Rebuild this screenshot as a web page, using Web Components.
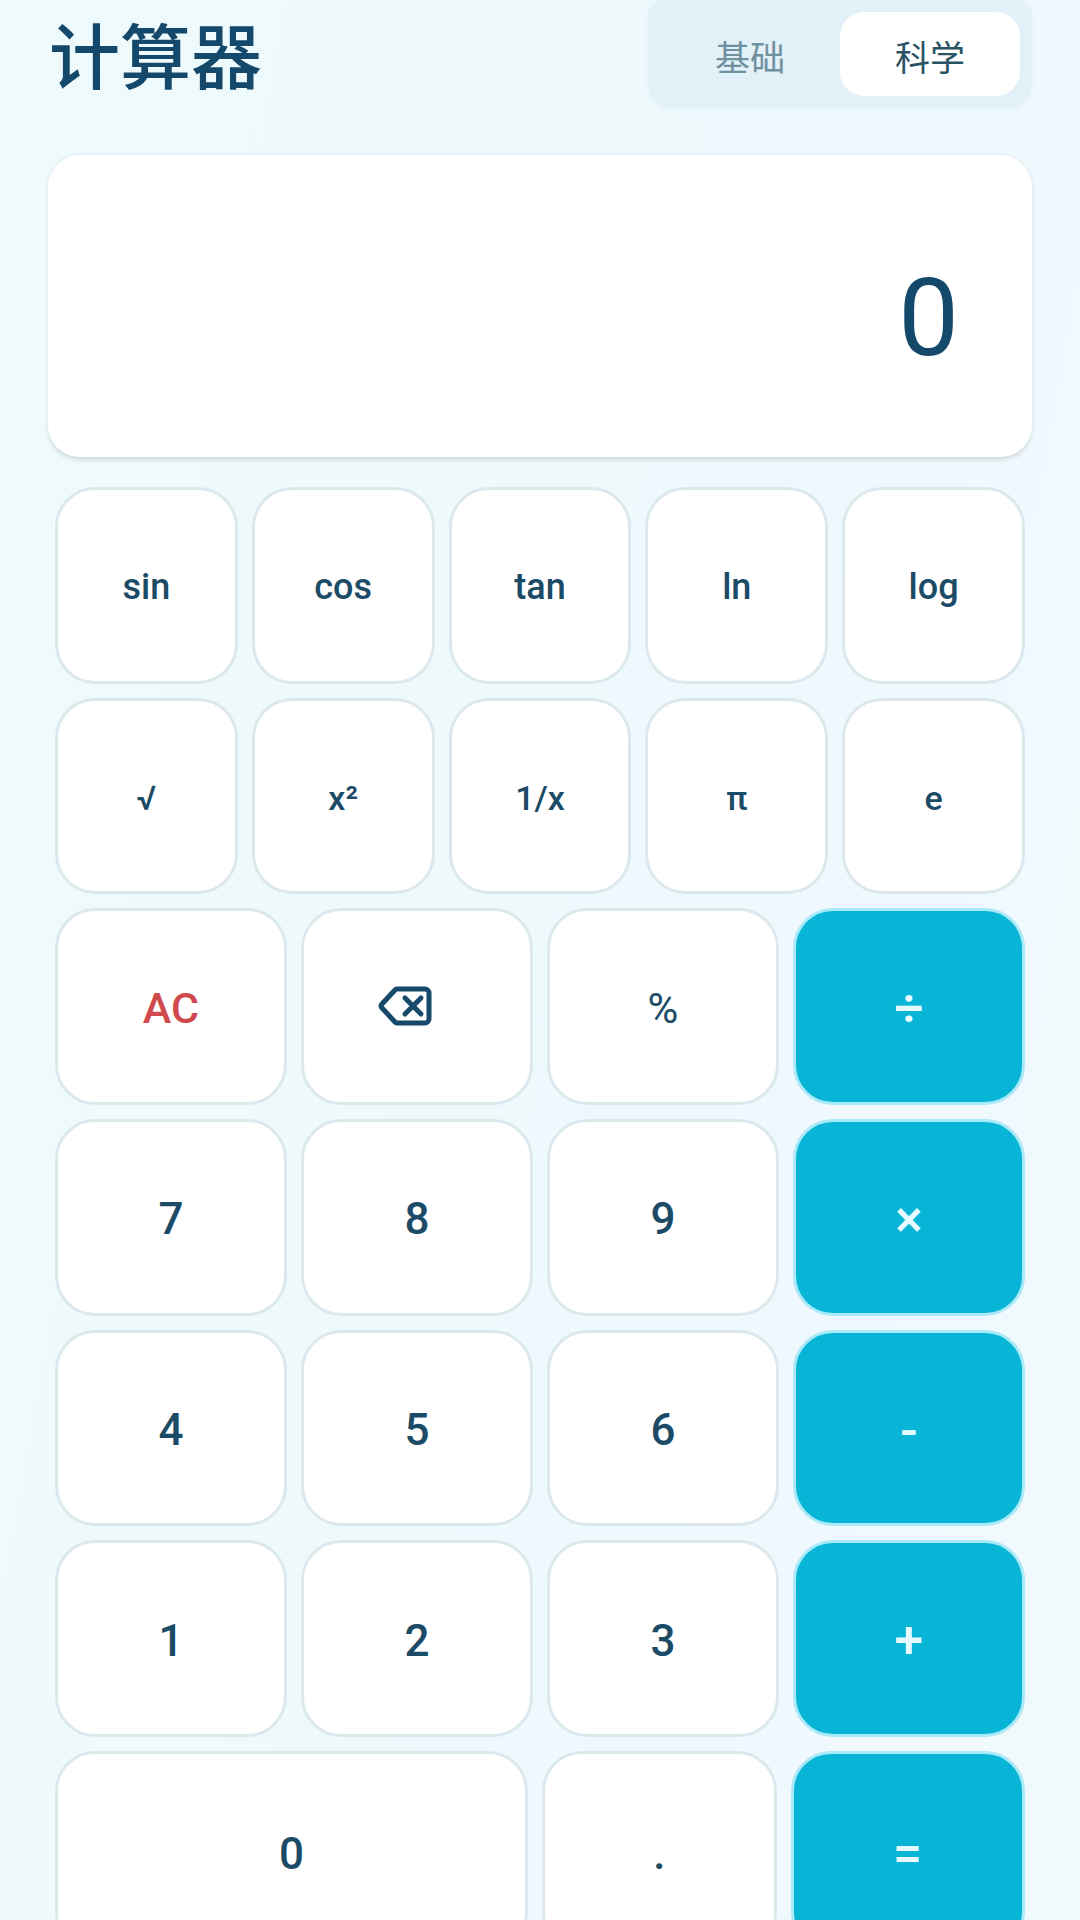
<!DOCTYPE html>
<html lang="zh">
<head>
<meta charset="utf-8">
<title>计算器</title>
<style>
html, body { margin: 0; height: 1920px; overflow: hidden; }
body {
    background: linear-gradient(100deg, #effafd 0%, #eef9fd 55%, #f1f9fd 100%);
    font-family: Roboto, "Noto Sans CJK SC", sans-serif;
}
.fn { --cols: 5; }
.main { --cols: 4; }
.last { --cols: 472fr 234fr 234fr; --row-h: 201px; }
</style>
</head>
<body>
<calc-app>
    <calc-header slot="header" title-text="计算器">
        <mode-toggle active="科学">
            <span>基础</span>
            <span>科学</span>
        </mode-toggle>
    </calc-header>
    <calc-display slot="display">0</calc-display>

    <key-row class="fn">
        <calc-key size="fn">sin</calc-key>
        <calc-key size="fn">cos</calc-key>
        <calc-key size="fn">tan</calc-key>
        <calc-key size="fn">ln</calc-key>
        <calc-key size="fn">log</calc-key>
    </key-row>
    <key-row class="fn">
        <calc-key size="sm">√</calc-key>
        <calc-key size="sm">x²</calc-key>
        <calc-key size="sm">1/x</calc-key>
        <calc-key size="sm">π</calc-key>
        <calc-key size="sm">e</calc-key>
    </key-row>
    <key-row class="main">
        <calc-key kind="danger">AC</calc-key>
        <calc-key aria-label="退格">
            <svg class="back" width="56" height="40" viewBox="0 0 54 40" fill="none" stroke="#16496a" stroke-width="5" stroke-linecap="round" stroke-linejoin="round" style="margin:0 24px 6px 0">
                <path d="M19 3H47a4 4 0 0 1 4 4V33a4 4 0 0 1-4 4H19a3 3 0 0 1-2-1L4 22a3 3 0 0 1 0-4L17 4a3 3 0 0 1 2-1Z"/>
                <path d="M27 12L43 28M43 12L27 28"/>
            </svg>
        </calc-key>
        <calc-key size="pct">%</calc-key>
        <calc-key kind="op">÷</calc-key>
    </key-row>
    <key-row class="main">
        <calc-key>7</calc-key><calc-key>8</calc-key><calc-key>9</calc-key>
        <calc-key kind="op">×</calc-key>
    </key-row>
    <key-row class="main">
        <calc-key>4</calc-key><calc-key>5</calc-key><calc-key>6</calc-key>
        <calc-key kind="op">-</calc-key>
    </key-row>
    <key-row class="main">
        <calc-key>1</calc-key><calc-key>2</calc-key><calc-key>3</calc-key>
        <calc-key kind="op">+</calc-key>
    </key-row>
    <key-row class="last">
        <calc-key>0</calc-key>
        <calc-key>.</calc-key>
        <calc-key kind="op">=</calc-key>
    </key-row>
</calc-app>

<script>
class CalcApp extends HTMLElement {
    constructor() {
        super();
        this.shadowDOM = this.attachShadow({mode: 'open'});
        this.shadowDOM.innerHTML = `
        <style>
        :host { display: block; padding: 0 48px; }
        .top { display: block; margin-bottom: 47px; }
        .screen { display: block; margin-bottom: 30px; }
        .pad { display: flex; flex-direction: column; gap: 14px; padding: 0 7px; }
        </style>
        <div class="top"><slot name="header"></slot></div>
        <div class="screen"><slot name="display"></slot></div>
        <div class="pad"><slot></slot></div>
        `;
    }
}

class CalcHeader extends HTMLElement {
    constructor() {
        super();
        this.shadowDOM = this.attachShadow({mode: 'open'});
    }

    connectedCallback() {
        this.shadowDOM.innerHTML = `
        <style>
        :host { display: flex; justify-content: space-between; align-items: flex-start; height: 108px; }
        h1 {
            margin: 0 0 0 1px;
            font: 500 71px/104px "Noto Sans CJK SC", sans-serif;
            color: #14496c;
        }
        </style>
        <h1>${this.getAttribute('title-text')}</h1>
        <slot></slot>
        `;
    }
}

class ModeToggle extends HTMLElement {
    constructor() {
        super();
        this.shadowDOM = this.attachShadow({mode: 'open'});
    }

    connectedCallback() {
        this.shadowDOM.innerHTML = `
        <style>
        :host {
            display: flex;
            box-sizing: border-box;
            width: 384px;
            height: 108px;
            padding: 12px;
            border-radius: 16px 16px 24px 24px;
            background: #e2f0f7;
            box-shadow: 0 1px 5px rgba(200, 225, 238, .3);
        }
        ::slotted(span) {
            flex: 1;
            display: flex;
            align-items: center;
            justify-content: center;
            border-radius: 24px;
            padding-top: 2px;
            font: 400 35px "Noto Sans CJK SC", sans-serif;
            color: #6f909f;
        }
        ::slotted(span.on) {
            background: #fff;
            color: #2a5364;
        }
        </style>
        <slot></slot>
        `;
        const active = this.getAttribute('active');
        this.querySelectorAll('span').forEach((item) => {
            item.classList.toggle('on', item.textContent === active);
        });
    }
}

class CalcDisplay extends HTMLElement {
    constructor() {
        super();
        this.shadowDOM = this.attachShadow({mode: 'open'});
        this.shadowDOM.innerHTML = `
        <style>
        :host {
            display: flex;
            align-items: center;
            justify-content: flex-end;
            box-sizing: border-box;
            height: 302px;
            padding: 24px 73px 0 0;
            border-radius: 32px;
            background: #fff;
            box-shadow: 0 -1px 0 1px #e7f1f5, 0 3px 4px rgba(90, 100, 110, .2);
            font: 400 108px Roboto, sans-serif;
            color: #14496c;
        }
        </style>
        <slot></slot>
        `;
    }
}

class KeyRow extends HTMLElement {
    constructor() {
        super();
        this.shadowDOM = this.attachShadow({mode: 'open'});
        const cols = getComputedStyle(this).getPropertyValue('--cols').trim();
        const template = /^\d+$/.test(cols) ? `repeat(${cols}, 1fr)` : cols;
        this.shadowDOM.innerHTML = `
        <style>
        :host {
            display: grid;
            grid-template-columns: ${template};
            grid-auto-rows: var(--row-h, 196.7px);
            column-gap: 14px;
        }
        </style>
        <slot></slot>
        `;
    }
}

class CalcKey extends HTMLElement {
    constructor() {
        super();
        this.shadowDOM = this.attachShadow({mode: 'open'});
        this.shadowDOM.innerHTML = `
        <style>
        :host {
            display: flex;
            align-items: center;
            justify-content: center;
            box-sizing: border-box;
            min-width: 0;
            padding-top: 4px;
            border: 3px solid #dbe9ed;
            border-radius: 40px;
            background: #fff;
            font: 500 44px Roboto, sans-serif;
            color: #1b4b66;
        }
        :host([size="fn"]) { font-size: 36px; }
        :host([size="sm"]) { font-size: 34px; }
        :host([size="pct"]) { font-size: 42px; font-weight: 400; }
        :host([kind="danger"]) { color: #d04a4d; font-size: 43px; padding-top: 2px; }
        :host([kind="op"]) {
            background: #09b5d6;
            border-color: #a9e9f8;
            color: #e6fbff;
            font-size: 52px;
        }
        </style>
        <slot></slot>
        `;
    }
}

customElements.define('calc-app', CalcApp);
customElements.define('calc-header', CalcHeader);
customElements.define('mode-toggle', ModeToggle);
customElements.define('calc-display', CalcDisplay);
customElements.define('key-row', KeyRow);
customElements.define('calc-key', CalcKey);
</script>
</body>
</html>
